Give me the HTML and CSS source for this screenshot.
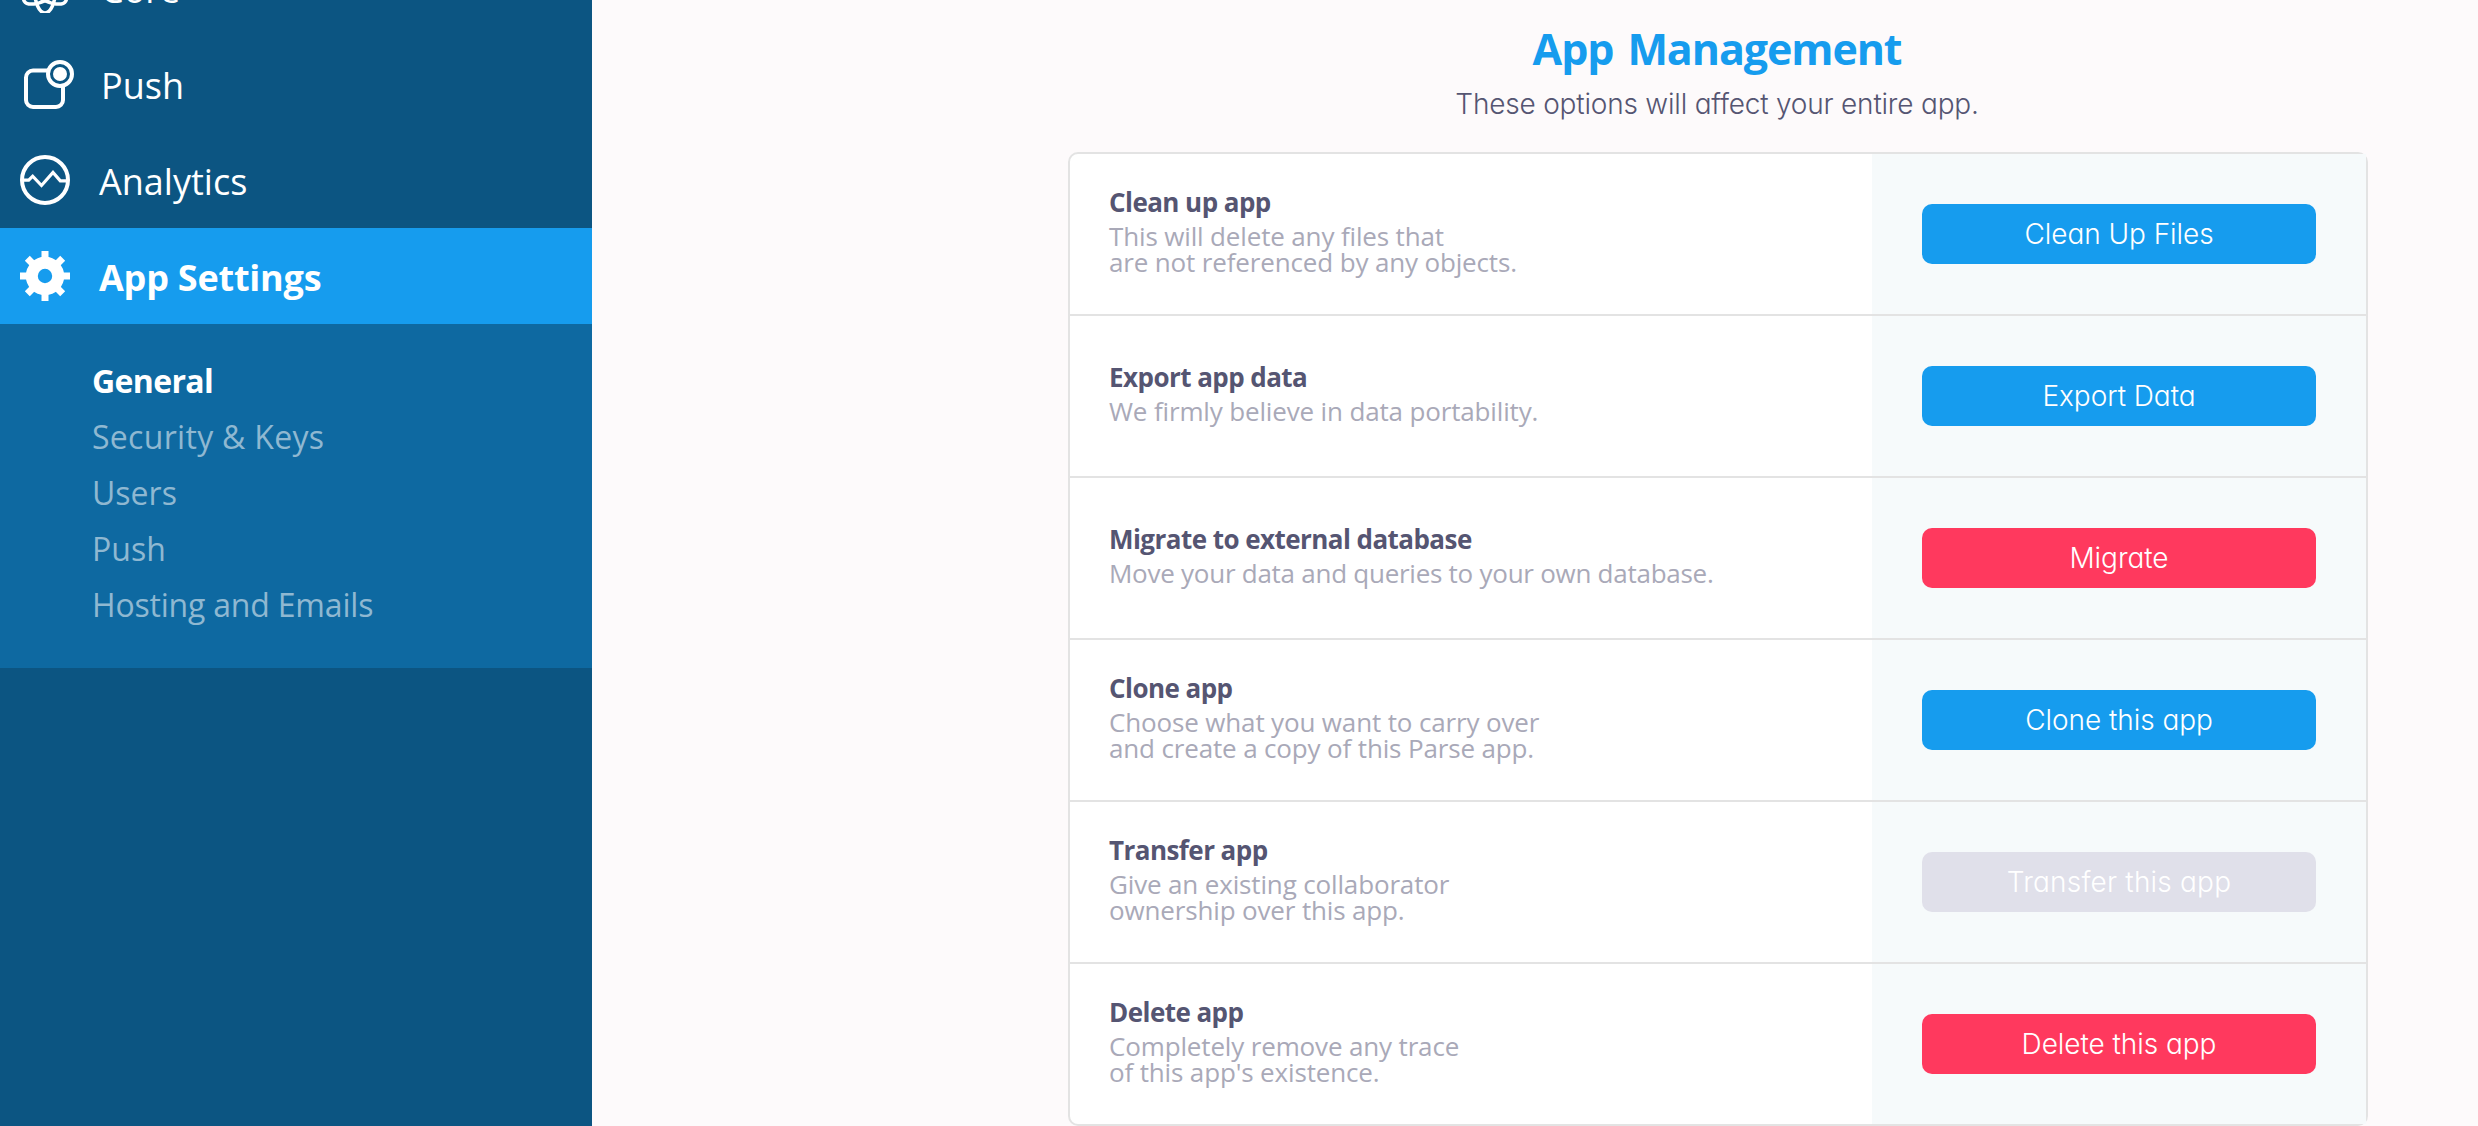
FILE: index.html
```html
<!DOCTYPE html>
<html lang="en">
<head>
<meta charset="utf-8">
<title>App Settings</title>
<link rel="stylesheet" href="styles.css">
</head>
<body>
<nav class="sidebar">
  <a class="nav-item nav-core">
    <svg class="icon" width="50" height="50" viewBox="0 0 50 50" fill="none" stroke="#fff" stroke-width="3.500">
      <ellipse cx="25" cy="26" rx="10.500" ry="24"/>
      <ellipse cx="25" cy="26" rx="10.500" ry="24" transform="rotate(60 25 26)"/>
      <ellipse cx="25" cy="26" rx="10.500" ry="24" transform="rotate(-60 25 26)"/>
      <circle cx="25" cy="26" r="4"/>
    </svg>
    <span class="nav-text">Core</span>
  </a>
  <a class="nav-item nav-push">
    <svg class="icon" width="54" height="50" viewBox="0 0 54 50" fill="none" stroke="#fff" stroke-width="4">
      <rect x="6" y="11.500" width="37" height="36.500" rx="7"/>
      <circle class="badge" cx="40" cy="15" r="12"/>
      <circle cx="40" cy="15" r="7" fill="#fff" stroke="none"/>
    </svg>
    <span class="nav-text">Push</span>
  </a>
  <a class="nav-item">
    <svg class="icon" width="50" height="50" viewBox="0 0 50 50" fill="none" stroke="#fff">
      <circle cx="25" cy="25" r="23" stroke-width="4"/>
      <path d="M2 25.200H8.700L12.700 21.200L21.500 30.500L33 17.500L40.300 25.800H48" stroke-width="3.200"/>
    </svg>
    <span class="nav-text">Analytics</span>
  </a>
  <a class="nav-item active">
    <svg class="icon" width="50" height="50" viewBox="0 0 50 50" fill="none" stroke="#fff">
      <circle cx="25" cy="25" r="13.200" stroke-width="12"/>
      <path d="M25 0V8M25 42V50M0 25H8M42 25H50M7.300 7.300L13 13M37 37L42.700 42.700M42.700 7.300L37 13M13 37L7.300 42.700" stroke-width="7"/>
    </svg>
    <span class="nav-text">App Settings</span>
  </a>
  <div class="submenu">
    <a class="sub current">General</a>
    <a class="sub spaced">Security &amp; Keys</a>
    <a class="sub">Users</a>
    <a class="sub">Push</a>
    <a class="sub tight">Hosting and Emails</a>
  </div>
</nav>
<main class="content">
  <h1 class="title">App Management</h1>
  <p class="subtitle">These options will affect your entire app.</p>
  <section class="card">
    <div class="row">
      <div class="label"><h2 class="name">Clean up app</h2><p class="desc">This will delete any files that<br>are not referenced by any objects.</p></div>
      <div class="action"><button class="btn">Clean Up Files</button></div>
    </div>
    <div class="row">
      <div class="label"><h2 class="name">Export app data</h2><p class="desc">We firmly believe in data portability.</p></div>
      <div class="action"><button class="btn">Export Data</button></div>
    </div>
    <div class="row">
      <div class="label"><h2 class="name">Migrate to external database</h2><p class="desc tight">Move your data and queries to your own database.</p></div>
      <div class="action"><button class="btn danger">Migrate</button></div>
    </div>
    <div class="row">
      <div class="label"><h2 class="name">Clone app</h2><p class="desc">Choose what you want to carry over<br>and create a copy of this Parse app.</p></div>
      <div class="action"><button class="btn">Clone this app</button></div>
    </div>
    <div class="row">
      <div class="label"><h2 class="name">Transfer app</h2><p class="desc">Give an existing collaborator<br>ownership over this app.</p></div>
      <div class="action"><button class="btn disabled">Transfer this app</button></div>
    </div>
    <div class="row">
      <div class="label"><h2 class="name">Delete app</h2><p class="desc">Completely remove any trace<br>of this app's existence.</p></div>
      <div class="action"><button class="btn danger">Delete this app</button></div>
    </div>
  </section>
</main>
</body>
</html>
```
FILE: styles.css
```css
* { box-sizing: border-box; }
body {
  margin: 0;
  height: 1126px;
  overflow: hidden;
  display: flex;
  background: #fdfafb;
  font-family: "Open Sans", "Noto Sans", sans-serif;
}
h1, h2, p { margin: 0; }

.sidebar {
  flex: none;
  width: 592px;
  height: 1126px;
  background: #0c5582;
  color: #fff;
}
.nav-item {
  display: flex;
  align-items: center;
  gap: 29px;
  height: 96px;
  padding-left: 20px;
  font-size: 36px;
  line-height: 92px;
}
.nav-text { padding-top: 3px; }
.nav-core { margin-top: -60px; gap: 31px; }
.nav-push { gap: 27px; }
.icon { flex: none; }
.badge { fill: #0c5582; }
.active {
  background: #169cee;
  font-weight: 700;
  letter-spacing: -0.22px;
}
.submenu {
  height: 344px;
  padding: 29px 0 0 92px;
  background: #0e69a1;
}
.sub {
  display: block;
  font-size: 32px;
  line-height: 56px;
  color: #8fb8d1;
}
.sub.spaced { letter-spacing: 0.3px; }
.sub.tight { letter-spacing: -0.2px; }
.current {
  color: #fff;
  font-weight: 700;
  letter-spacing: -0.65px;
}

.content {
  flex: 1;
  display: flex;
  flex-direction: column;
  align-items: center;
  padding: 27px 110px 0 476px;
}
.title {
  padding-right: 2px;
  font-size: 43px;
  line-height: 44px;
  font-weight: 700;
  letter-spacing: -1.1px;
  word-spacing: 4px;
  color: #169cee;
}
.subtitle {
  margin: 19px 0 34px;
  padding-right: 2px;
  font: 330 28px/28px Inter, sans-serif;
  font-feature-settings: "cv11";
  letter-spacing: -0.2px;
  color: #555572;
}
.card {
  flex: none;
  width: 1300px;
  border: 2px solid #e3e3e3;
  border-radius: 10px;
  background: #fff;
}
.row {
  display: flex;
  height: 162px;
  border-bottom: 2px solid #e3e3e3;
}
.row:last-child { height: 160px; border-bottom: 0; }
.label {
  flex: 1;
  display: flex;
  flex-direction: column;
  justify-content: center;
  padding: 0 0 4px 38px;
}
.name {
  margin-bottom: 8px;
  padding-left: 1px;
  font-size: 26px;
  line-height: 26px;
  font-weight: 700;
  letter-spacing: -0.55px;
  color: #555572;
}
.desc {
  padding-left: 1px;
  font-size: 26px;
  line-height: 26px;
  letter-spacing: -0.15px;
  color: #a9a9b8;
}
.desc.tight { letter-spacing: -0.26px; }
.action {
  width: 494px;
  display: flex;
  align-items: center;
  justify-content: center;
  background: #f6fafb;
}
.btn {
  width: 394px;
  height: 60px;
  padding: 0;
  border: 0;
  border-radius: 10px;
  background: #169cee;
  color: #fff;
  font: 330 28px/60px Inter, sans-serif;
  font-feature-settings: "cv11";
  letter-spacing: -0.05px;
}
.danger { background: #ff395e; }
.disabled { background: #e0e0ea; letter-spacing: 0.2px; }
```
